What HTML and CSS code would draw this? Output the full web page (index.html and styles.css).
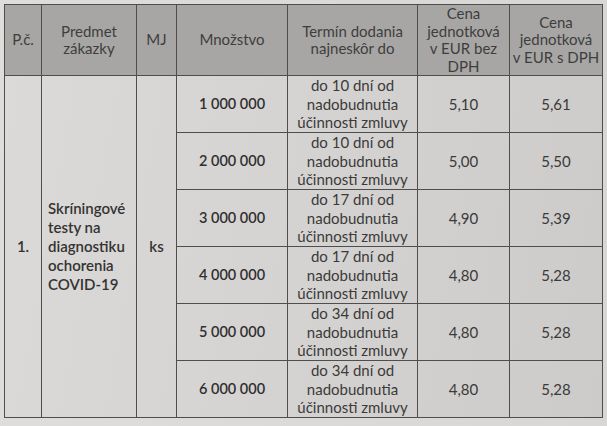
FILE: index.html
```html
<!DOCTYPE html>
<html lang="sk">
<head>
<meta charset="utf-8">
<title>Tabuľka</title>
<link rel="stylesheet" href="styles.css">
</head>
<body>
<table class="grid">
  <colgroup>
    <col class="c1"><col class="c2"><col class="c3"><col class="c4"><col class="c5"><col class="c6"><col class="c7">
  </colgroup>
  <thead>
    <tr class="head">
      <th>P.č.</th>
      <th>Predmet<br>zákazky</th>
      <th>MJ</th>
      <th>Množstvo</th>
      <th>Termín dodania<br>najneskôr do</th>
      <th>Cena<br>jednotková<br>v EUR bez<br>DPH</th>
      <th>Cena<br>jednotková<br>v EUR s DPH</th>
    </tr>
  </thead>
  <tbody>
    <tr>
      <td class="num" rowspan="6">1.</td>
      <td class="subj" rowspan="6">Skríningové<br>testy na<br>diagnostiku<br>ochorenia<br>COVID-19</td>
      <td class="unit" rowspan="6">ks</td>
      <td class="qty">1 000 000</td>
      <td class="term">do 10 dní od<br>nadobudnutia<br>účinnosti zmluvy</td>
      <td class="price">5,10</td>
      <td class="price">5,61</td>
    </tr>
    <tr>
      <td class="qty">2 000 000</td>
      <td class="term">do 10 dní od<br>nadobudnutia<br>účinnosti zmluvy</td>
      <td class="price">5,00</td>
      <td class="price">5,50</td>
    </tr>
    <tr>
      <td class="qty">3 000 000</td>
      <td class="term">do 17 dní od<br>nadobudnutia<br>účinnosti zmluvy</td>
      <td class="price">4,90</td>
      <td class="price">5,39</td>
    </tr>
    <tr>
      <td class="qty">4 000 000</td>
      <td class="term">do 17 dní od<br>nadobudnutia<br>účinnosti zmluvy</td>
      <td class="price">4,80</td>
      <td class="price">5,28</td>
    </tr>
    <tr>
      <td class="qty">5 000 000</td>
      <td class="term">do 34 dní od<br>nadobudnutia<br>účinnosti zmluvy</td>
      <td class="price">4,80</td>
      <td class="price">5,28</td>
    </tr>
    <tr>
      <td class="qty">6 000 000</td>
      <td class="term">do 34 dní od<br>nadobudnutia<br>účinnosti zmluvy</td>
      <td class="price">4,80</td>
      <td class="price">5,28</td>
    </tr>
  </tbody>
</table>
</body>
</html>
```

FILE: styles.css
```css
html, body {
  margin: 0;
  padding: 0;
}
body {
  background: linear-gradient(90deg, #dedddb 0%, #d8d7d5 100%);
  width: 607px;
  height: 426px;
  overflow: hidden;
  padding: 4px 0 0 4px;
  box-sizing: border-box;
  font-family: Lato, "Liberation Sans", sans-serif;
  color: #3a3a3a;
}
.grid {
  border-collapse: collapse;
  table-layout: fixed;
  width: 598px;
  background: linear-gradient(100deg, #dcdad8 0%, #d5d3d1 50%, #cdcbc9 100%);
}
.c1 { width: 37px; }
.c2 { width: 95px; }
.c3 { width: 40px; }
.c4 { width: 111px; }
.c5 { width: 130px; }
.c6 { width: 92px; }
.c7 { width: 93px; }

.grid th, .grid td {
  border: 1.5px solid #4e4e4e;
  padding: 0;
  text-align: center;
  vertical-align: middle;
  font-size: 15px;
}
.head th {
  height: 68px;
  background: #a7a6a4;
  font-weight: 400;
  line-height: 17.5px;
  color: #3e3e3e;
}
.grid td {
  height: 56px;
  line-height: 18.5px;
}
.num, .unit {
  font-weight: 600;
  color: #333;
}
.grid .subj {
  text-align: left;
  padding-left: 6px;
  font-weight: 600;
  line-height: 19px;
  color: #333;
}
.grid .qty {
  font-weight: 600;
  font-size: 14.5px;
  color: #2f2f2f;
}
.term {
  color: #3a3a3a;
}
.price {
  color: #3a3a3a;
}
```
